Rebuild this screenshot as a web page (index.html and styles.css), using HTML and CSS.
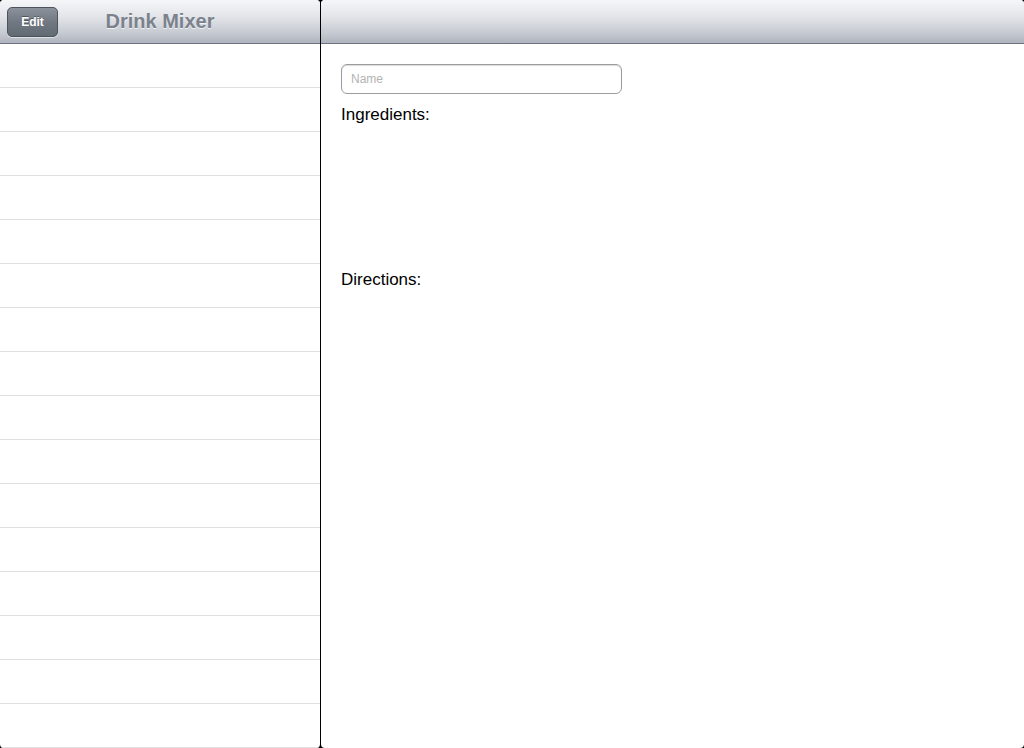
FILE: index.html
```html
<!DOCTYPE html>
<html>
<head>
<meta charset="utf-8">
<link rel="stylesheet" href="styles.css">
</head>
<body>
<div class="app">
  <div class="panel master">
    <div class="navbar">
      <button class="edit-btn">Edit</button>
      <div class="nav-title">Drink Mixer</div>
    </div>
    <ul class="list">
      <li></li><li></li><li></li><li></li><li></li><li></li><li></li><li></li>
      <li></li><li></li><li></li><li></li><li></li><li></li><li></li><li></li>
    </ul>
  </div>
  <div class="panel detail">
    <div class="navbar"></div>
    <div class="form">
      <input class="name-field" type="text" placeholder="Name">
      <div class="label">Ingredients:</div>
      <div class="ingredients"></div>
      <div class="label">Directions:</div>
    </div>
  </div>
</div>
</body>
</html>
```
FILE: styles.css
```css
html, body {
  margin: 0;
  padding: 0;
  background: #000;
  font-family: "Liberation Sans", Arial, sans-serif;
}
.app {
  display: flex;
  gap: 1px;
  width: 1024px;
  height: 748px;
  overflow: hidden;
}
.panel {
  background: #fff;
  border-radius: 4px;
  overflow: hidden;
  display: flex;
  flex-direction: column;
}
.master {
  width: 320px;
  flex: none;
}
.detail {
  flex: 1;
}
.navbar {
  height: 43px;
  border-bottom: 1px solid #6d7380;
  background: linear-gradient(to bottom, #f5f6f8 0%, #e2e4e8 40%, #c3c7cf 80%, #aeb3bd 100%);
  position: relative;
  display: flex;
  align-items: center;
  flex: none;
}
.edit-btn {
  margin-left: 7px;
  width: 51px;
  height: 30px;
  border: 1px solid #4c535d;
  border-radius: 5px;
  background: linear-gradient(to bottom, #8b929b 0%, #717882 50%, #626a74 100%);
  color: #fff;
  font-family: "Liberation Sans", Arial, sans-serif;
  font-weight: bold;
  font-size: 12px;
  padding: 0;
  box-shadow: 0 1px 0 rgba(255,255,255,0.5);
  text-shadow: 0 -1px 0 rgba(0,0,0,0.35);
}
.nav-title {
  position: absolute;
  left: 0;
  right: 0;
  top: 10px;
  text-align: center;
  font-size: 20px;
  font-weight: bold;
  color: #7b828d;
  text-shadow: 0 1px 0 rgba(255,255,255,0.7);
  pointer-events: none;
}
.list {
  list-style: none;
  margin: 0;
  padding: 0;
}
.list li {
  height: 43px;
  border-bottom: 1px solid #e0e0e0;
}
.form {
  padding: 20px 0 0 20px;
  display: flex;
  flex-direction: column;
  align-items: flex-start;
}
.name-field {
  width: 281px;
  height: 30px;
  box-sizing: border-box;
  border: 1px solid #9c9c9c;
  border-radius: 6px;
  padding: 0 9px;
  font-family: "Liberation Sans", Arial, sans-serif;
  font-size: 12px;
  outline: none;
  box-shadow: inset 0 1px 1px rgba(0,0,0,0.15);
}
.name-field::placeholder {
  color: #b3b3b3;
}
.label {
  font-size: 17px;
  color: #000;
  margin-top: 10px;
  line-height: 22px;
}
.ingredients {
  height: 133px;
}
```
